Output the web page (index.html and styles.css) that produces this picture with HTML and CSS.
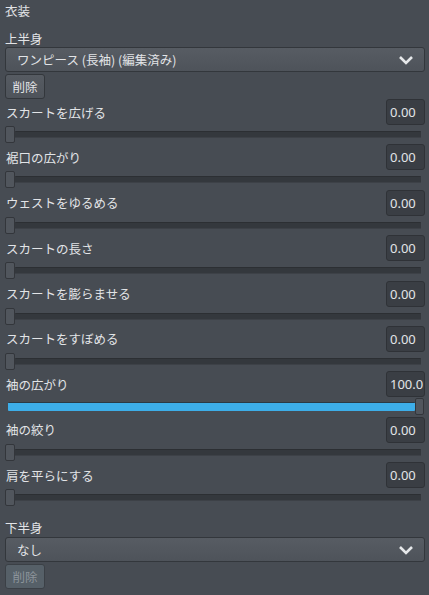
FILE: index.html
```html
<!DOCTYPE html>
<html lang="ja">
<head>
<meta charset="utf-8">
<link rel="stylesheet" href="styles.css">
</head>
<body>
<div class="panel">
  <div class="title">衣装</div>

  <div class="section-label first">上半身</div>
  <div class="dropdown">
    <span>ワンピース (長袖) (編集済み)</span>
    <svg class="chev" width="16" height="10" viewBox="0 0 16 10"><polyline points="2,2 8,8 14,2" fill="none" stroke="#e6e8ea" stroke-width="2.6"/></svg>
  </div>
  <div class="btn">削除</div>

  <div class="rows">
    <div class="group">
      <div class="row"><span>スカートを広げる</span><div class="val">0.00</div></div>
      <div class="slider"><div class="handle"></div><div class="track"></div></div>
    </div>
    <div class="group">
      <div class="row"><span>裾口の広がり</span><div class="val">0.00</div></div>
      <div class="slider"><div class="handle"></div><div class="track"></div></div>
    </div>
    <div class="group">
      <div class="row"><span>ウェストをゆるめる</span><div class="val">0.00</div></div>
      <div class="slider"><div class="handle"></div><div class="track"></div></div>
    </div>
    <div class="group">
      <div class="row"><span>スカートの長さ</span><div class="val">0.00</div></div>
      <div class="slider"><div class="handle"></div><div class="track"></div></div>
    </div>
    <div class="group">
      <div class="row"><span>スカートを膨らませる</span><div class="val">0.00</div></div>
      <div class="slider"><div class="handle"></div><div class="track"></div></div>
    </div>
    <div class="group">
      <div class="row"><span>スカートをすぼめる</span><div class="val">0.00</div></div>
      <div class="slider"><div class="handle"></div><div class="track"></div></div>
    </div>
    <div class="group">
      <div class="row"><span>袖の広がり</span><div class="val">100.0</div></div>
      <div class="slider"><div class="track full"></div><div class="handle"></div></div>
    </div>
    <div class="group">
      <div class="row"><span>袖の絞り</span><div class="val">0.00</div></div>
      <div class="slider"><div class="handle"></div><div class="track"></div></div>
    </div>
    <div class="group">
      <div class="row"><span>肩を平らにする</span><div class="val">0.00</div></div>
      <div class="slider"><div class="handle"></div><div class="track"></div></div>
    </div>
  </div>

  <div class="section-label second">下半身</div>
  <div class="dropdown">
    <span>なし</span>
    <svg class="chev" width="16" height="10" viewBox="0 0 16 10"><polyline points="2,2 8,8 14,2" fill="none" stroke="#e6e8ea" stroke-width="2.6"/></svg>
  </div>
  <div class="btn disabled">削除</div>
</div>
</body>
</html>
```

FILE: styles.css
```css
html, body {
  margin: 0;
  padding: 0;
  background: #474c53;
}
body {
  font-family: "Noto Sans CJK JP", "Noto Sans", sans-serif;
  font-size: 12.5px;
  color: #e2e4e7;
  width: 429px;
  height: 595px;
  overflow: hidden;
}
.panel {
  padding: 0 4px 0 5px;
  display: flex;
  flex-direction: column;
}
.title {
  height: 21px;
  line-height: 21px;
}
.section-label {
  height: 17px;
  line-height: 17px;
}
.section-label.first {
  margin-top: 9px;
}
.section-label.second {
  margin-top: 13px;
  height: 18px;
  line-height: 18px;
}
.dropdown {
  box-sizing: border-box;
  height: 25px;
  border: 1px solid #33373c;
  border-radius: 3px;
  background: linear-gradient(#575c63, #4e535a);
  display: flex;
  align-items: center;
  justify-content: space-between;
  padding: 0 10px 0 11px;
}
.chev {
  display: block;
}
.btn {
  box-sizing: border-box;
  margin-top: 2px;
  width: 40px;
  height: 25px;
  border: 1px solid #33373c;
  border-radius: 3px;
  background: linear-gradient(#565b62, #4e535a);
  display: flex;
  align-items: center;
  justify-content: center;
}
.btn.disabled {
  background: #566068;
  border-color: #3b4046;
  color: #8c949b;
}
.rows {
  display: flex;
  flex-direction: column;
  gap: 1.375px;
}
.group {
  display: flex;
  flex-direction: column;
  gap: 1px;
}
.row {
  height: 26px;
  display: flex;
  align-items: center;
  justify-content: space-between;
  padding-left: 1px;
}
.val {
  box-sizing: border-box;
  width: 39px;
  height: 26px;
  background: #3a3e44;
  border: 1px solid #2f3237;
  border-radius: 3px;
  padding-left: 3px;
  line-height: 24px;
  font-family: "Noto Sans", sans-serif;
  font-size: 13px;
  color: #e2e4e7;
}
.slider {
  height: 17px;
  display: flex;
  align-items: center;
}
.handle {
  box-sizing: border-box;
  width: 10px;
  height: 17px;
  background: #51565d;
  border: 1px solid #33363b;
  border-radius: 2px;
  flex: none;
}
.track {
  flex: 1;
  height: 7px;
  background: #34383d;
  border-top: 1px solid #2c2f33;
  border-bottom: 1px solid #3d4147;
  box-sizing: border-box;
  margin-right: 4px;
  border-radius: 1px;
}
.track.full {
  height: 9px;
  background: #3daee9;
  border-top: 1px solid #2b3a45;
  border-bottom: none;
  margin-left: 3px;
  margin-right: 0;
}
.track.full + .handle {
  width: 9px;
  margin-right: 1px;
}
```
